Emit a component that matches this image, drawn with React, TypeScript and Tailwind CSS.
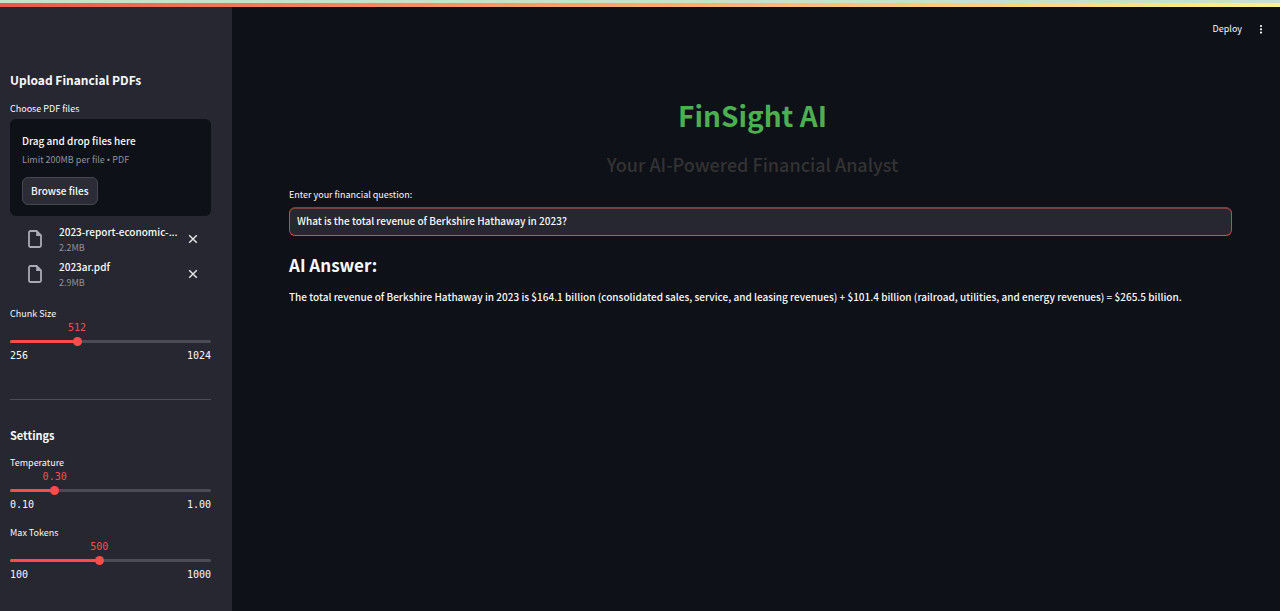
import { useState } from "react";

function FileIcon() {
  return (
    <svg viewBox="0 0 14 18" className="h-[18px] w-[14px]" fill="none" aria-hidden="true">
      <path d="M2.5 1H8.6L13 5.4V15.5A1.5 1.5 0 0 1 11.5 17H2.5A1.5 1.5 0 0 1 1 15.5V2.5A1.5 1.5 0 0 1 2.5 1Z" stroke="#a9aab6" strokeWidth="1.8" />
      <path d="M8.2 1V6H13Z" fill="#a9aab6" />
    </svg>
  );
}

function CloseIcon() {
  return (
    <svg viewBox="0 0 10 10" className="size-[10px]" aria-hidden="true">
      <path d="M1.2 1.2L8.8 8.8M8.8 1.2L1.2 8.8" stroke="#e0e0e5" strokeWidth="1.5" />
    </svg>
  );
}

type SliderProps = { id: string; label: string; min: number; max: number; step: number; initial: number; digits: number };

function Slider({ id, label, min, max, step, initial, digits }: SliderProps) {
  const [value, setValue] = useState(initial);
  const percent = `${((value - min) / (max - min)) * 100}%`;
  return (
    <div>
      <label htmlFor={id} className="block text-[9px] leading-[14px]">{label}</label>
      <div className="relative h-3 font-['DejaVu_Sans_Mono',monospace] text-[10px] leading-[14px] text-[#ff4b4b]">
        <output htmlFor={id} className="absolute -translate-x-1/2" style={{ left: percent }}>{value.toFixed(digits)}</output>
      </div>
      <div className="relative flex h-4 items-center">
        <div className="h-[3px] w-full overflow-hidden rounded-full bg-[#4b4c56]">
          <div className="h-full bg-[#ff4b4b]" style={{ width: percent }} />
        </div>
        <input
          id={id}
          type="range"
          min={min}
          max={max}
          step={step}
          value={value}
          onChange={(e) => setValue(Number(e.target.value))}
          className="absolute -left-1 h-4 w-[calc(100%+8px)] cursor-pointer appearance-none bg-transparent [&::-webkit-slider-thumb]:size-[9px] [&::-webkit-slider-thumb]:appearance-none [&::-webkit-slider-thumb]:rounded-full [&::-webkit-slider-thumb]:bg-[#ff4b4b]"
        />
      </div>
      <div className="flex justify-between font-['DejaVu_Sans_Mono',monospace] text-[10px] leading-[14px]">
        <span>{min.toFixed(digits)}</span>
        <span>{max.toFixed(digits)}</span>
      </div>
    </div>
  );
}

const files = [
  { name: "2023-report-economic-...", size: "2.2MB" },
  { name: "2023ar.pdf", size: "2.9MB" },
];

function Sidebar() {
  return (
    <aside className="w-[232px] shrink-0 bg-[#262730] pt-[63px] pr-[21px] pb-6 pl-[10px]">
      <h2 className="text-[12px] leading-5 font-bold">Upload Financial PDFs</h2>
      <p className="mt-[11px] text-[9px] leading-4">Choose PDF files</p>
      <section className="mt-[2px] rounded-md bg-[#0e1117] px-3 pt-[14px] pb-[11px]">
        <p className="text-[10px] leading-4 font-medium">Drag and drop files here</p>
        <p className="mt-1 text-[9px] leading-[14px] text-[#91929a]">
          Limit 200MB per file <span className="font-['Noto_Sans',sans-serif]">•</span> PDF
        </p>
        <button type="button" className="mt-[10px] h-7 rounded-md border border-[#454650] bg-[#2b2c36] px-2 text-[10px] leading-4 font-medium">
          Browse files
        </button>
      </section>
      <ul className="mt-[5px]">
        {files.map((file) => (
          <li key={file.name} className="flex h-[35px] items-center pr-[13px] pl-[18px]">
            <FileIcon />
            <div className="ml-[17px] min-w-0 grow pt-[2px]">
              <p className="text-[10px] leading-4 font-medium whitespace-nowrap">{file.name}</p>
              <p className="text-[9px] leading-[15px] text-[#91929a]">{file.size}</p>
            </div>
            <button type="button" aria-label={`Remove ${file.name}`}>
              <CloseIcon />
            </button>
          </li>
        ))}
      </ul>
      <div className="mt-4">
        <Slider id="chunk" label="Chunk Size" min={256} max={1024} step={1} initial={512} digits={0} />
      </div>
      <hr className="mt-9 border-[#4b4c56]" />
      <h2 className="mt-[25px] text-[11px] leading-5 font-bold">Settings</h2>
      <div className="mt-[11px] flex flex-col gap-[14px]">
        <Slider id="temperature" label="Temperature" min={0.1} max={1} step={0.01} initial={0.3} digits={2} />
        <Slider id="tokens" label="Max Tokens" min={100} max={1000} step={1} initial={500} digits={0} />
      </div>
    </aside>
  );
}

export default function App() {
  return (
    <div className="flex min-h-screen flex-col bg-[#0e1117] font-['Noto_Sans_CJK_SC','Noto_Sans',sans-serif] text-[#fafafa]">
      <div className="h-[3px] bg-[#c5e3c8]" />
      <div className="h-1 bg-linear-to-r from-[#e9564f] to-[#fbf48a]" />
      <div className="flex grow">
        <Sidebar />
        <div className="min-w-0 grow">
          <header className="flex h-11 items-center justify-end gap-4 pr-4">
            <button type="button" className="text-[9px] leading-4">Deploy</button>
            <button type="button" aria-label="Main menu">
              <svg viewBox="0 0 6 10" className="h-[10px] w-[6px]" fill="#fafafa" aria-hidden="true">
                <circle cx="3" cy="2" r="1.1" />
                <circle cx="3" cy="5.3" r="1.1" />
                <circle cx="3" cy="8.6" r="1.1" />
              </svg>
            </button>
          </header>
          <main className="pt-11 pr-12 pl-[57px]">
            <div className="pr-4 text-center">
              <h1 className="text-[28px] leading-10 font-bold text-[#4caf50]">FinSight AI</h1>
              <p className="mt-[15px] text-[18px] leading-7 font-medium text-[#333333]">Your AI-Powered Financial Analyst</p>
            </div>
            <label htmlFor="question" className="mt-[9px] block text-[9px] leading-4">Enter your financial question:</label>
            <input
              id="question"
              type="text"
              defaultValue="What is the total revenue of Berkshire Hathaway in 2023?"
              className="mt-1 block h-[29px] w-full rounded-md border border-t-2 border-x-[#d14348] border-t-[#843c44] border-b-[#e0484c] bg-[#262730] px-[7px] pb-1 text-[10px] font-medium outline-none"
            />
            <h2 className="mt-[15px] text-[17px] leading-7 font-bold">AI Answer:</h2>
            <p className="mt-[10px] text-[10px] leading-4 font-medium">
              The total revenue of Berkshire Hathaway in 2023 is $164.1 billion (consolidated sales, service, and leasing revenues) + $101.4 billion (railroad, utilities, and energy revenues) = $265.5 billion.
            </p>
          </main>
        </div>
      </div>
    </div>
  );
}
